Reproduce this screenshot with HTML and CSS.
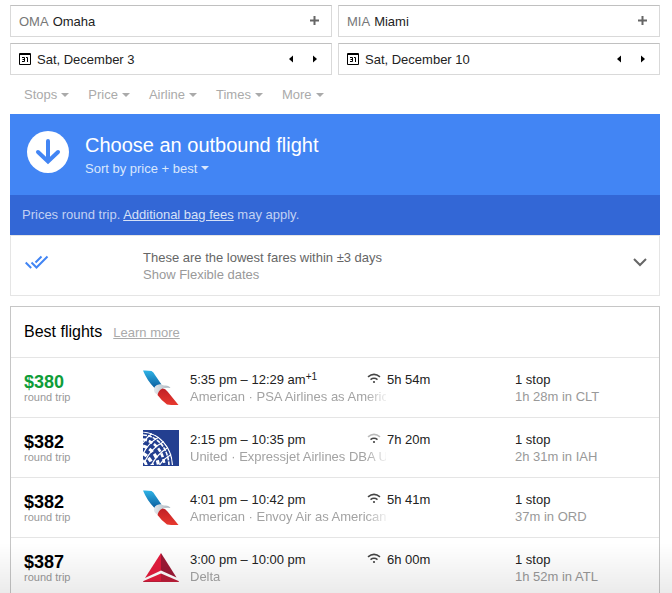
FILE: index.html
```html
<!DOCTYPE html>
<html lang="en">
<head>
<meta charset="utf-8">
<meta name="viewport" content="width=device-width, initial-scale=1">
<title>Flights</title>
<link rel="stylesheet" href="styles.css">
</head>
<body>
<svg class="defs" aria-hidden="true">
  <defs>
    <linearGradient id="aa-blue" x1="0" y1="0" x2="0" y2="1"><stop offset="0" stop-color="#2fb4e6"/><stop offset="1" stop-color="#0a5c9e"/></linearGradient>
    <linearGradient id="aa-red" x1="0" y1="0" x2="0" y2="1"><stop offset="0" stop-color="#c01f25"/><stop offset="1" stop-color="#e8392f"/></linearGradient>
    <linearGradient id="aa-head" x1="0" y1="0" x2="1" y2="0"><stop offset="0" stop-color="#e3e8ec"/><stop offset="1" stop-color="#a9b4bd"/></linearGradient>
    <clipPath id="globe"><path d="M0 1.500C16 2 30 17 30 35H0z"/></clipPath>
  </defs>
  <symbol id="american" viewBox="0 0 36 36">
    <path fill="url(#aa-blue)" d="M0 .5Q5 .300 8.500 1Q10.500 2 12 5L18.500 14.500Q13 14.500 11.500 18Q4 10.500 0 .5z"/>
    <path fill="url(#aa-head)" d="M11 19Q12 14 18 14.500L21 15.500Q26 15 27.500 18Q23 17.500 20.500 18.500Q16 20 14.500 24.500Q10.500 23 11 19z"/>
    <path fill="url(#aa-red)" d="M19.500 18.500Q22.500 18.500 24.500 21.500L35.500 35Q30 35.300 24 34.500Q18 30 14.500 25Q15.500 20 19.500 18.500z"/>
  </symbol>
  <symbol id="united" viewBox="0 0 36 36">
    <path fill="#233f90" d="M0 0h36v36H0z"/>
    <g fill="none" stroke="#fff" clip-path="url(#globe)">
      <path stroke-width="1.200" d="M0 2C16 3 29 17 29.500 36"/>
      <path stroke-width="1.600" stroke-dasharray="4 1" d="M0 5C14 5.500 25.500 18 26 36"/>
      <path stroke-width="2.600" stroke-dasharray="4 2" d="M0 9.500C11 10.500 20.500 21 21.500 36"/>
      <path stroke-width="3.200" stroke-dasharray="4.500 2.500" d="M0 16C7 17.500 14.500 25 15.500 36"/>
      <path stroke-width="3.400" stroke-dasharray="4.500 2.500" d="M0 23.500C4 25.500 8.500 30 9.500 36"/>
      <path stroke-width="2.800" d="M0 30.500Q3 32.500 3.500 36"/>
      <path stroke-width="1.200" d="M0 13Q4 7 9 3.500M0 24Q5 13 16 7M1 33Q8 18 21 11.500M8 36Q14 24 25 17.500M16 36Q20 29 28.500 24.500"/>
    </g>
  </symbol>
  <symbol id="delta" viewBox="0 0 36 36">
    <path fill="#e31b3c" d="M18 3V20.500L2 28z"/>
    <path fill="#9b1a36" d="M18 3V20.500L33.500 27.500z"/>
    <path fill="#e31b3c" d="M18 23.500V32H.5V31z"/>
    <path fill="#b91d39" d="M18 23.500V32H35.500V31z"/>
    <path fill="#c01f3a" d="M.5 31h35v1H.5z"/>
  </symbol>
  <symbol id="wifi" viewBox="0 0 14 11">
    <g fill="none" stroke-width="1.600">
      <path class="wifi-outer" d="M1 3.800Q7-1 13 3.800"/>
      <path stroke="#444" d="M3.500 6.600Q7 4 10.500 6.600"/>
    </g>
    <circle cx="7" cy="9" r="1.100" fill="#444"/>
  </symbol>
  <symbol id="calendar" viewBox="0 0 12 12">
    <path fill="#000" fill-rule="evenodd" d="M1 0h10q1 0 1 1v10q0 1-1 1H1q-1 0-1-1V1q0-1 1-1zM1 2v9h10V2z"/>
    <path fill="none" stroke="#000" d="M3 4.500h2.500V8.500H3M3.500 6.500h2M7 4.500h1.500V9"/>
  </symbol>
</svg>

<main class="page">
  <form class="search">
    <div class="field">
      <label class="code" for="from">OMA</label>
      <input id="from" type="text" value="Omaha">
      <button class="add" type="button" aria-label="Add origin"><svg width="9" height="9" viewBox="0 0 9 9"><path fill="#666" d="M3.500 0h2v3.500H9v2H5.500V9h-2V5.500H0v-2h3.500z"/></svg></button>
    </div>
    <div class="field">
      <label class="code" for="to">MIA</label>
      <input id="to" type="text" value="Miami">
      <button class="add" type="button" aria-label="Add destination"><svg width="9" height="9" viewBox="0 0 9 9"><path fill="#666" d="M3.500 0h2v3.500H9v2H5.500V9h-2V5.500H0v-2h3.500z"/></svg></button>
    </div>
    <div class="field date">
      <label for="depart" aria-label="Departure date"><svg width="12" height="12"><use href="#calendar"/></svg></label>
      <input id="depart" type="text" value="Sat, December 3">
      <button class="step" type="button" aria-label="Previous day"><svg width="4" height="8" viewBox="0 0 4 8"><path d="M4 .5v7L0 4z"/></svg></button>
      <button class="step" type="button" aria-label="Next day"><svg width="4" height="8" viewBox="0 0 4 8"><path d="M0 .5v7L4 4z"/></svg></button>
    </div>
    <div class="field date">
      <label for="return" aria-label="Return date"><svg width="12" height="12"><use href="#calendar"/></svg></label>
      <input id="return" type="text" value="Sat, December 10">
      <button class="step" type="button" aria-label="Previous day"><svg width="4" height="8" viewBox="0 0 4 8"><path d="M4 .5v7L0 4z"/></svg></button>
      <button class="step" type="button" aria-label="Next day"><svg width="4" height="8" viewBox="0 0 4 8"><path d="M0 .5v7L4 4z"/></svg></button>
    </div>
  </form>

  <nav class="filters">
    <button class="menu" type="button">Stops</button>
    <button class="menu" type="button">Price</button>
    <button class="menu" type="button">Airline</button>
    <button class="menu" type="button">Times</button>
    <button class="menu" type="button">More</button>
  </nav>

  <header class="banner">
    <svg width="42" height="42" viewBox="0 0 42 42" aria-hidden="true"><circle cx="21" cy="21" r="21" fill="#fff"/><path fill="none" stroke="#4285f4" stroke-width="4" stroke-linecap="round" stroke-linejoin="miter" d="M21 10v20M11 21l10 9.500L31 21"/></svg>
    <div class="banner-text">
      <h1>Choose an outbound flight</h1>
      <button class="menu sort" type="button">Sort by price + best</button>
    </div>
  </header>
  <p class="notice">Prices round trip. <a href="#">Additional bag fees</a> may apply.</p>

  <section class="fares">
    <svg width="24" height="15" viewBox="0 0 24 15" aria-hidden="true"><path fill="none" stroke="#4285f4" stroke-width="2" d="M.7 7.500l5.500 5.500M6.500 7.500l5 5L22.500 1.500M10.500 7.500L16.500 1.500"/></svg>
    <div class="fares-text">
      <div>These are the lowest fares within ±3 days</div>
      <a href="#">Show Flexible dates</a>
    </div>
    <button class="expand" type="button" aria-label="Expand"><svg width="14" height="9" viewBox="0 0 14 9"><path fill="none" stroke="#666" stroke-width="2" d="M1 1l6 6 6-6"/></svg></button>
  </section>

  <section class="results">
    <div class="results-head"><h2>Best flights</h2><a href="#">Learn more</a></div>
    <ul class="flights">
      <li class="flight">
        <div class="fare"><strong class="best">$380</strong><span>round trip</span></div>
        <svg class="logo" role="img" aria-label="American"><use href="#american"/></svg>
        <div class="trip"><div class="times"><span>5:35 pm – 12:29 am<sup>+1</sup></span><svg class="wifi"><use href="#wifi"/></svg></div><div class="carrier">American · PSA Airlines as American</div></div>
        <div>5h 54m</div>
        <div>1 stop<span class="layover">1h 28m in CLT</span></div>
      </li>
      <li class="flight">
        <div class="fare"><strong>$382</strong><span>round trip</span></div>
        <svg class="logo" role="img" aria-label="United"><use href="#united"/></svg>
        <div class="trip"><div class="times"><span>2:15 pm – 10:35 pm</span><svg class="wifi weak"><use href="#wifi"/></svg></div><div class="carrier">United · Expressjet Airlines DBA United</div></div>
        <div>7h 20m</div>
        <div>1 stop<span class="layover">2h 31m in IAH</span></div>
      </li>
      <li class="flight">
        <div class="fare"><strong>$382</strong><span>round trip</span></div>
        <svg class="logo" role="img" aria-label="American"><use href="#american"/></svg>
        <div class="trip"><div class="times"><span>4:01 pm – 10:42 pm</span><svg class="wifi"><use href="#wifi"/></svg></div><div class="carrier">American · Envoy Air as American</div></div>
        <div>5h 41m</div>
        <div>1 stop<span class="layover">37m in ORD</span></div>
      </li>
      <li class="flight">
        <div class="fare"><strong>$387</strong><span>round trip</span></div>
        <svg class="logo" role="img" aria-label="Delta"><use href="#delta"/></svg>
        <div class="trip"><div class="times"><span>3:00 pm – 10:00 pm</span><svg class="wifi"><use href="#wifi"/></svg></div><div class="carrier">Delta</div></div>
        <div>6h 00m</div>
        <div>1 stop<span class="layover">1h 52m in ATL</span></div>
      </li>
    </ul>
  </section>
</main>
<div class="fade" aria-hidden="true"></div>
</body>
</html>
```
FILE: styles.css
```css
* { box-sizing: border-box; }
html { scrollbar-width: none; }
body {
  margin: 0;
  background: #fff;
  color: #222;
  font: 13px/17px "Liberation Sans", Arial, sans-serif;
}
h1, h2, p, ul { margin: 0; padding: 0; font-weight: normal; }
button {
  margin: 0;
  padding: 0;
  border: 0;
  background: none;
  color: inherit;
  font: inherit;
  cursor: pointer;
}
svg { display: block; flex: none; }
.defs { position: absolute; width: 0; height: 0; }
.page { padding: 5px 12px 0 10px; }

/* Search fields */
.search { display: grid; grid-template-columns: 1fr 1fr; gap: 6px; }
.field {
  display: flex;
  align-items: center;
  height: 32px;
  padding: 0 12px 0 8px;
  border: 1px solid #d9d9d9;
  border-top-color: #c0c0c0;
}
.field input {
  flex: 1;
  min-width: 0;
  padding: 0 0 0 4px;
  border: 0;
  outline: 0;
  background: none;
  color: #222;
  font: inherit;
}
.code { color: #777; }
.add { padding-bottom: 2px; }
.date { padding-right: 14px; }
.date input { padding-left: 6px; }
.step + .step { margin-left: 20px; }

/* Drop-down triggers */
.filters { display: flex; gap: 19px; padding: 11px 14px; color: #aaa; }
.menu { display: flex; align-items: center; gap: 4px; }
.menu::after {
  content: "";
  border: 4px solid transparent;
  border-top-color: currentColor;
  border-bottom: 0;
}

/* Banner */
.banner {
  display: flex;
  align-items: center;
  gap: 16px;
  height: 81px;
  padding: 0 17px 5px;
  background: #4285f4;
  color: #fff;
}
.banner-text { padding-top: 4px; }
.banner h1 { font-size: 20px; line-height: 26px; }
.sort { margin-top: 2px; color: #d9e7fd; }
.notice {
  padding: 11px 12px 12px;
  background: #3367d6;
  color: #c2d1f3;
}
.notice a { color: #d6e1f7; }

/* Lowest fares */
.fares {
  display: flex;
  align-items: center;
  height: 61px;
  padding: 0 12px 6px 14px;
  border: 1px solid #e5e5e5;
}
.fares-text { flex: 1; margin-left: 94px; padding-top: 6px; color: #666; }
.fares-text a { color: #999; text-decoration: none; }

/* Results */
.results { margin-top: 10px; border: 1px solid #c6c6c6; }
.results-head {
  display: flex;
  align-items: baseline;
  gap: 11px;
  padding: 15px 13px;
  color: #999;
}
.results-head h2 { color: #000; font-size: 16px; line-height: 20px; }
.results-head a { color: #aaa; }
.flights { list-style: none; }
.flight {
  display: grid;
  grid-template-columns: 119px 47px 197px 128px 1fr;
  height: 60px;
  padding: 13px 0 0 13px;
  border-top: 1px solid #e5e5e5;
}
.fare { padding-top: 2px; color: #999; font-size: 11px; line-height: 12px; }
.fare strong { display: block; color: #000; font-size: 18px; line-height: 18px; }
.fare .best { color: #0f9d39; }
.logo { width: 36px; height: 36px; margin-top: -1px; }
.trip { width: 196px; }
.times { display: flex; justify-content: space-between; padding-right: 5px; }
.times sup { font-size: 10px; line-height: 0; vertical-align: 4px; }
.wifi { width: 14px; height: 11px; margin-top: 2px; }
.wifi-outer { stroke: var(--outer, #444); }
.weak { --outer: #bbb; }
.carrier {
  overflow: hidden;
  color: #a3a3a3;
  white-space: nowrap;
  mask-image: linear-gradient(to right, #000 176px, transparent 200px);
}
.layover { display: block; color: #999; }

/* Shade along the bottom of the window */
.fade {
  position: fixed;
  right: 0;
  bottom: 0;
  left: 0;
  height: 50px;
  background: linear-gradient(rgba(0, 0, 0, 0), rgba(0, 0, 0, .08));
  pointer-events: none;
}
```
